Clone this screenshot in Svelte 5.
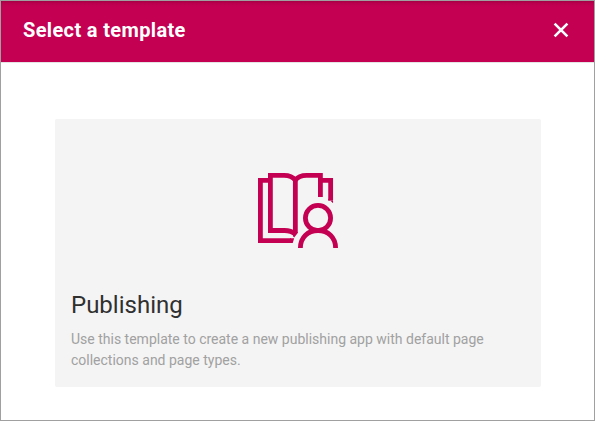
<script>
  const template = {
    name: 'Publishing',
    description: 'Use this template to create a new publishing app with default page collections and page types.'
  };
</script>

<div class="dialog">
  <header>
    <h1>Select a template</h1>
    <button class="close" aria-label="Close">
      <svg width="16" height="16" viewBox="0 0 16 16"><path d="M1.6 1.6 14.4 14.4M14.4 1.6 1.6 14.4" /></svg>
    </button>
  </header>
  <main>
    <article class="card">
      <svg class="icon" width="80" height="75" viewBox="0 0 80 75">
        <path d="M12.4 7.4H2.4V67.6H33" />
        <path d="M37.4 61C35.5 59.5 32 57.5 26.5 57.5H12.4V2.4H26C31 2.4 35 4 37.3 7.2C39.6 4 43.6 2.4 48.6 2.4H62.4V24" />
        <path d="M37.35 6V60M62.4 7.4H72.65V27.5" />
        <path class="fill" d="M32 65.2H36.2L34.7 70H32ZM35 59H39.75V60L36.2 64.4L35 63.2ZM70.25 25.6 75.05 30.3V27.4H70.25Z" />
        <circle cx="60" cy="45" r="12.6" />
        <path d="M42.4 75C42.4 64.3 50 57.5 60 57.5S77.6 64.3 77.6 75" />
      </svg>
      <h2>{template.name}</h2>
      <p>{template.description}</p>
    </article>
  </main>
</div>

<style>
  :global(body) { margin: 0; }
  .dialog {
    box-sizing: border-box;
    width: 595px;
    height: 421px;
    border: 1px solid #a0a0a0;
    background: #fff;
    font-family: Roboto, sans-serif;
    overflow: hidden;
  }
  header {
    box-sizing: border-box;
    height: 61px;
    padding: 0 25px 3px 22px;
    display: flex;
    align-items: center;
    justify-content: space-between;
    background: linear-gradient(#a30045 0, #b9004d 2px, #c40052 6px);
    box-shadow: 0 1px 0 #e4e4e4;
    color: #fff;
  }
  h1 { margin: 0; font-size: 20px; line-height: 24px; font-weight: 700; letter-spacing: 0.35px; }
  .close {
    display: flex;
    border: 0;
    padding: 0;
    background: none;
  }
  .close path { fill: none; stroke: #fff; stroke-width: 2.6; }
  main { padding: 57px 53px 0 54px; }
  .card {
    box-sizing: border-box;
    height: 268px;
    padding: 54px 16px 0;
    border-radius: 2px;
    background: #f4f4f4;
  }
  .icon {
    display: block;
    margin-left: 187px;
    fill: none;
    stroke: #c40052;
    stroke-width: 4.8;
  }
  .icon .fill { fill: #c40052; stroke: none; }
  h2 {
    margin: 41px 0 0;
    font-size: 24px;
    line-height: 32px;
    font-weight: 400;
    color: #303030;
  }
  p {
    margin: 8px 0 0;
    font-size: 14px;
    line-height: 21px;
    color: #a1a1a1;
  }
</style>
